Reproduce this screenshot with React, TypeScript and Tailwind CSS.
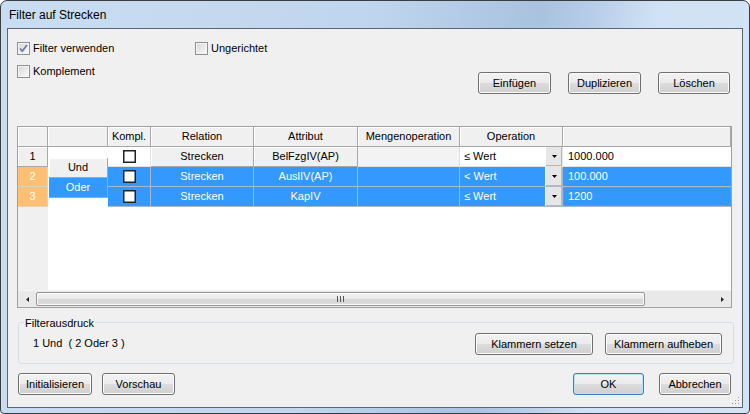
import React from 'react';

function WinCheck({ checked }: { checked?: boolean }) {
  return (
    <div className="w-[13px] h-[13px] border border-[#8e8f8f] bg-[linear-gradient(135deg,#d6d6d6,#fbfbfb)] shadow-[inset_0_0_0_1px_#f6f6f6] flex items-center justify-center shrink-0">
      {checked && (
        <svg width="11" height="11" viewBox="0 0 11 11">
          <path d="M2 5.5 L4.3 8 L9 2" fill="none" stroke="#6a7fa6" strokeWidth="1.8" />
        </svg>
      )}
    </div>
  );
}

function WinButton({ children, w, def }: { children: React.ReactNode; w: string; def?: boolean }) {
  return (
    <button
      className={`${w} h-[22px] rounded-[3px] border text-[11px] text-black leading-none bg-[linear-gradient(#f2f2f2,#ebebeb_50%,#dddddd_50%,#cfcfcf)] ${
        def ? 'border-[#3c7fb1] shadow-[inset_0_0_0_1px_#b6e4f8]' : 'border-[#707070] shadow-[inset_0_0_0_1px_#fbfbfb]'
      }`}
    >
      {children}
    </button>
  );
}

function GridCheck() {
  return <div className="w-[13px] h-[13px] border border-[#222] bg-white shadow-[inset_0_0_0_0.5px_#222]" />;
}

function DropBtn() {
  return (
    <div className="w-[17px] h-full bg-[#e6e6e6] border-l border-[#ffffff] shadow-[inset_-1px_-1px_0_#b8b8b8] flex items-center justify-center">
      <svg width="5" height="3" viewBox="0 0 5 3">
        <path d="M0 0 H5 L2.5 3 Z" fill="#000" />
      </svg>
    </div>
  );
}

function HeaderCell({ w, children }: { w: string; children?: React.ReactNode }) {
  return (
    <div className={`${w} h-[20px] bg-[#f0f0f0] border-r border-b border-[#a8a8a8] shadow-[inset_1px_1px_0_#ffffff] flex items-center justify-center text-[11px]`}>
      {children}
    </div>
  );
}

function DataRow({
  sel,
  rel,
  attr,
  op,
  val,
  focus,
}: {
  sel: boolean;
  rel: string;
  attr: string;
  op: string;
  val: string;
  focus?: boolean;
}) {
  const selCls = 'bg-[#3399ff] text-white border-r border-b border-[#a9b9cc]';
  return (
    <div className="flex h-[20px] text-[11px]">
      <div className={`w-[43px] flex items-center justify-center ${sel ? selCls : 'bg-white border-r border-b border-[#e4e4e4]'}`}>
        <GridCheck />
      </div>
      <div
        className={`w-[103px] flex items-center justify-center ${
          sel ? selCls : 'bg-[#f0f0f0] border-r border-b border-[#a8a8a8] shadow-[inset_1px_1px_0_#ffffff]'
        }`}
      >
        {rel}
      </div>
      <div
        className={`w-[104px] flex items-center justify-center ${
          sel ? selCls : 'bg-[#f0f0f0] border-r border-b border-[#a8a8a8] shadow-[inset_1px_1px_0_#ffffff]'
        }`}
      >
        {attr}
      </div>
      <div className={`w-[102px] ${sel ? selCls : 'bg-[#f3f3f3] border-r border-b border-[#e0e0e0]'}`} />
      <div className={`w-[103px] flex ${sel ? 'border-r border-b border-[#a9b9cc]' : 'border-r border-b border-[#e4e4e4]'}`}>
        <div className={`flex-1 flex items-center pl-[4px] ${sel ? 'bg-[#3399ff] text-white' : 'bg-white'}`}>{op}</div>
        <DropBtn />
      </div>
      <div className={`w-[168px] flex ${sel ? 'bg-[#3399ff] text-white border-b border-[#a9b9cc]' : 'bg-white border-b border-[#e4e4e4]'}`}>
        <div className={`flex-1 flex items-center pl-[4px] ${focus ? 'border border-dotted border-[#d08a3a]' : 'border border-transparent'}`}>
          {val}
        </div>
      </div>
    </div>
  );
}

export default function App() {
  return (
    <div className="w-[750px] h-[414px] bg-white font-['Liberation_Sans',Arial,sans-serif] text-black">
      <div className="w-[750px] h-[414px] flex flex-col border border-[#3a3d42] rounded-t-[7px] rounded-b-[4px] bg-[linear-gradient(100deg,#c9ddf2_0%,#c0d6ee_45%,#a8c2df_66%,#b6cde8_72%,#cfe1f4_80%,#d3e4f5_100%)] overflow-hidden">
        <div className="h-[27px] flex items-center pl-[8px] text-[12px] text-black">Filter auf Strecken</div>
        <div className="relative mx-[6px] h-[380px] border border-[#5a6677] bg-[#f0f0f0] flex flex-col text-[11px]">
          {/* top section */}
          <div className="h-[97px] pt-[13px] pl-[9px] pr-[12px] flex justify-between">
            <div className="flex flex-col gap-[10px]">
              <div className="flex items-center h-[13px]">
                <div className="w-[178px] flex items-center gap-[3px]">
                  <WinCheck checked />
                  <span>Filter verwenden</span>
                </div>
                <div className="flex items-center gap-[3px]">
                  <WinCheck />
                  <span>Ungerichtet</span>
                </div>
              </div>
              <div className="flex items-center gap-[3px] h-[13px]">
                <WinCheck />
                <span>Komplement</span>
              </div>
            </div>
            <div className="mt-[30px] flex gap-[17px]">
              <WinButton w="w-[73px]">Einfügen</WinButton>
              <WinButton w="w-[73px]">Duplizieren</WinButton>
              <WinButton w="w-[72px]">Löschen</WinButton>
            </div>
          </div>

          {/* grid */}
          <div className="ml-[9px] mr-[10px] h-[182px] border border-[#a0a0a0] bg-white flex flex-col">
            <div className="flex-1 flex flex-col">
              <div className="flex">
                <HeaderCell w="w-[30px]" />
                <HeaderCell w="w-[60px]" />
                <HeaderCell w="w-[43px]">Kompl.</HeaderCell>
                <HeaderCell w="w-[103px]">Relation</HeaderCell>
                <HeaderCell w="w-[104px]">Attribut</HeaderCell>
                <HeaderCell w="w-[102px]">Mengenoperation</HeaderCell>
                <HeaderCell w="w-[103px]">Operation</HeaderCell>
                <HeaderCell w="w-[168px]" />
              </div>
              <div className="flex-1 flex">
                <div className="w-[30px] bg-[#f0f0f0] flex flex-col text-[11px]">
                  <div className="h-[20px] flex items-center justify-center border-r border-b border-[#a8a8a8] shadow-[inset_1px_1px_0_#ffffff]">1</div>
                  <div className="h-[20px] flex items-center justify-center bg-[#fcbf74] text-white border-r border-b border-[#e2d2bd]">2</div>
                  <div className="h-[20px] flex items-center justify-center bg-[#fcbf74] text-white border-r border-b border-[#e2d2bd]">3</div>
                </div>
                <div className="w-[60px] bg-white flex flex-col">
                  <div className="h-[11px]" />
                  <div className="h-[20px] ml-[1px] bg-[#f0f0f0] border-r border-b border-[#a8a8a8] shadow-[inset_1px_1px_0_#ffffff] flex items-center justify-center pb-[1px]">
                    Und
                  </div>
                  <div className="h-[20px] ml-[1px] bg-[#3399ff] text-white border-r border-b border-[#a8a8a8] flex items-center justify-center pb-[1px]">
                    Oder
                  </div>
                </div>
                <div className="flex flex-col">
                  <DataRow sel={false} rel="Strecken" attr="BelFzgIV(AP)" op="≤ Wert" val="1000.000" />
                  <DataRow sel rel="Strecken" attr="AuslIV(AP)" op="< Wert" val="100.000" />
                  <DataRow sel rel="Strecken" attr="KapIV" op="≤ Wert" val="1200" focus />
                </div>
              </div>
            </div>
            {/* scrollbar */}
            <div className="h-[17px] flex bg-[#e9e9e9] border-t border-[#f4f4f4]">
              <div className="w-[18px] flex items-center justify-center">
                <svg width="3" height="5" viewBox="0 0 3 5">
                  <path d="M3 0 V5 L0 2.5 Z" fill="#222" />
                </svg>
              </div>
              <div className="w-[609px] my-[1px] rounded-[2px] border border-[#979797] bg-[linear-gradient(#f4f4f4,#e8e8e8_50%,#d6d6d6_51%,#dcdcdc)] shadow-[inset_0_0_0_1px_#f9f9f9] flex items-center justify-center">
                <svg width="7" height="6" viewBox="0 0 7 6">
                  <path d="M0.5 0 V6 M3.5 0 V6 M6.5 0 V6" stroke="#555" strokeWidth="1" />
                </svg>
              </div>
              <div className="flex-1" />
              <div className="w-[17px] flex items-center justify-center">
                <svg width="3" height="5" viewBox="0 0 3 5">
                  <path d="M0 0 V5 L3 2.5 Z" fill="#222" />
                </svg>
              </div>
            </div>
          </div>

          {/* group box */}
          <div className="relative ml-[10px] mr-[8px] mt-[14px] h-[42px] border border-[#d5dfe5] rounded-[3px] flex items-center justify-between pl-[14px] pr-[11px]">
            <span className="absolute -top-[8px] left-[5px] px-[1px] bg-[#f0f0f0]">Filterausdruck</span>
            <span className="mt-[1px]">1 Und&nbsp; ( 2 Oder 3 )</span>
            <div className="flex gap-[12px] mt-[2px]">
              <WinButton w="w-[118px]">Klammern setzen</WinButton>
              <WinButton w="w-[117px]">Klammern aufheben</WinButton>
            </div>
          </div>

          {/* bottom buttons */}
          <div className="mt-[9px] pl-[10px] pr-[11px] flex justify-between">
            <div className="flex gap-[10px]">
              <WinButton w="w-[74px]">Initialisieren</WinButton>
              <WinButton w="w-[73px]">Vorschau</WinButton>
            </div>
            <div className="flex gap-[15px]">
              <WinButton w="w-[71px]" def>
                OK
              </WinButton>
              <WinButton w="w-[72px]">Abbrechen</WinButton>
            </div>
          </div>

          <svg className="absolute right-[1px] bottom-[1px]" width="10" height="10" viewBox="0 0 10 10">
            <g fill="#9a9a9a">
              <rect x="7" y="1" width="1" height="1" />
              <rect x="4" y="4" width="1" height="1" />
              <rect x="7" y="4" width="1" height="1" />
              <rect x="1" y="7" width="1" height="1" />
              <rect x="4" y="7" width="1" height="1" />
              <rect x="7" y="7" width="1" height="1" />
            </g>
          </svg>
        </div>
      </div>
    </div>
  );
}
